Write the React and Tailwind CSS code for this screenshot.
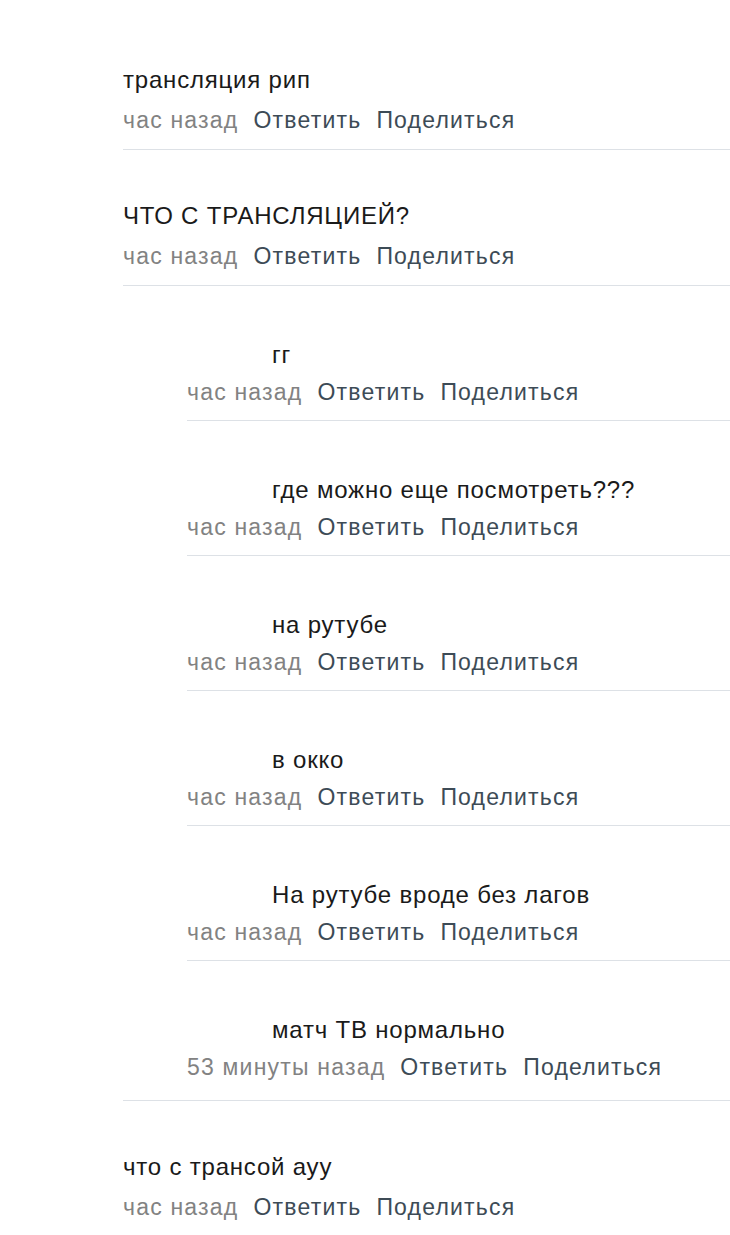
import React from "react";

const font = { fontFamily: "'Liberation Sans', Arial, sans-serif" };

function Meta({ time }) {
  return (
    <div className="flex h-[30px] items-center gap-[15px] text-[23px] leading-[30px] tracking-[1.2px]">
      <span className="text-[#828282]">{time}</span>
      <span className="text-[#3d4b56]">Ответить</span>
      <span className="text-[#3d4b56]">Поделиться</span>
    </div>
  );
}

function TopComment({ text, time = "час назад", border = true }) {
  return (
    <div className={"pt-[51px] pb-[14px] " + (border ? "border-b border-[#dde1e6]" : "")}>
      <div className="h-[30px] text-[24px] leading-[30px] tracking-[0.8px] text-[#1a1a1a]">{text}</div>
      <div className="mt-[10px]">
        <Meta time={time} />
      </div>
    </div>
  );
}

function Reply({ text, time = "час назад", border = true }) {
  return (
    <div className={"pt-[54px] pb-[13px] " + (border ? "border-b border-[#dde1e6]" : "")}>
      <div className="h-[30px] pl-[85px] text-[24px] leading-[30px] tracking-[0.8px] text-[#1a1a1a]">{text}</div>
      <div className="mt-[7px]">
        <Meta time={time} />
      </div>
    </div>
  );
}

export default function App() {
  const replies = [
    { text: "гг" },
    { text: "где можно еще посмотреть???" },
    { text: "на рутубе" },
    { text: "в окко" },
    { text: "На рутубе вроде без лагов" },
    { text: "матч ТВ нормально", time: "53 минуты назад" },
  ];
  return (
    <div className="min-h-[1235px] w-[730px] bg-white pl-[123px] pt-[14px]" style={font}>
      <TopComment text="трансляция рип" />
      <div className="border-b border-[#dde1e6] pb-[5px]">
        <TopComment text="ЧТО С ТРАНСЛЯЦИЕЙ?" />
        <div className="ml-[64px]">
          {replies.map((r, i) => (
            <Reply key={i} text={r.text} time={r.time} border={i !== replies.length - 1} />
          ))}
        </div>
      </div>
      <TopComment text="что с трансой ауу" border={false} />
    </div>
  );
}
